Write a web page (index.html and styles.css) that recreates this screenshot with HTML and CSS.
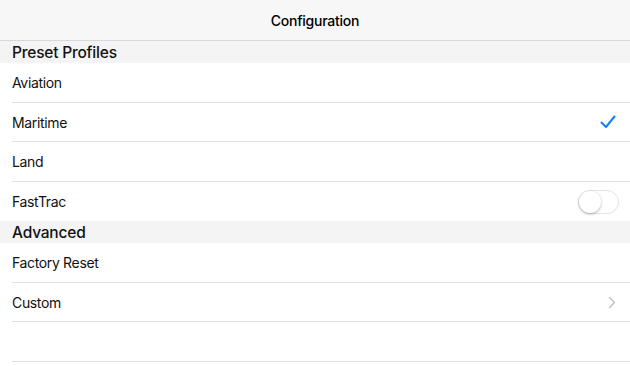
FILE: index.html
```html
<!DOCTYPE html>
<html lang="en">

<head>
    <meta charset="UTF-8" />
    <meta name="viewport" content="width=device-width, initial-scale=1.0" />
    <title>Configuration</title>
    <link rel="stylesheet" href="styles.css">
</head>

<body>
    <!-- Navigation bar -->
    <div class="nav-bar">Configuration</div>

    <!-- Preset Profiles -->
    <div class="section-header">Preset Profiles</div>
    <ul class="table-section">
        <li class="cell">Aviation</li>
        <li class="cell">
            Maritime
            <svg class="checkmark" width="16" height="14" viewBox="0 0 16 14">
                <path d="M1.5 7.5 L6 12 L14.5 1.5" fill="none" stroke="#157efb" stroke-width="2" stroke-linecap="round" stroke-linejoin="round" />
            </svg>
        </li>
        <li class="cell">Land</li>
        <li class="cell last">
            FastTrac
            <span class="switch"><span class="knob"></span></span>
        </li>
    </ul>

    <!-- Advanced -->
    <div class="section-header">Advanced</div>
    <ul class="table-section">
        <li class="cell">Factory Reset</li>
        <li class="cell">
            Custom
            <svg class="chevron" width="8" height="13" viewBox="0 0 8 13">
                <path d="M1.5 1.5 L6.5 6.5 L1.5 11.5" fill="none" stroke="#c4c4c8" stroke-width="1.6" stroke-linecap="round" stroke-linejoin="round" />
            </svg>
        </li>
        <li class="cell"></li>
    </ul>
</body>

</html>
```

FILE: styles.css
```css
body {
    font-family: Inter, "Liberation Sans", Arial, sans-serif;
    margin: 0;
    background-color: #ffffff;
    color: #000;
}

.nav-bar {
    height: 40px;
    display: flex;
    align-items: center;
    justify-content: center;
    background-color: #f7f7f7;
    border-bottom: 1px solid #d8d8d8;
    font-size: 14px;
    font-weight: 500;
    letter-spacing: -0.25px;
}

.section-header {
    height: 22px;
    display: flex;
    align-items: center;
    padding-left: 12px;
    background-color: #f4f4f4;
    font-size: 15.5px;
    font-weight: 500;
    letter-spacing: -0.2px;
    color: #111;
}

.table-section {
    list-style: none;
    margin: 0;
    padding: 0 0 0 12px;
}

.cell {
    height: 39.5px;
    box-sizing: border-box;
    display: flex;
    align-items: center;
    justify-content: space-between;
    padding-top: 1px;
    padding-right: 12px;
    border-bottom: 1px solid #e2e2e2;
    font-size: 14px;
    letter-spacing: -0.35px;
    color: #111;
}

.cell.last {
    border-bottom: none;
}

.checkmark {
    margin-right: 2px;
}

.chevron {
    margin-right: 2px;
}

.switch {
    width: 41px;
    height: 24px;
    box-sizing: border-box;
    border-radius: 12px;
    border: 1px solid #e3e3e3;
    background: white;
    display: flex;
    align-items: center;
    margin-right: -1px;
}

.knob {
    width: 22px;
    height: 22px;
    border-radius: 50%;
    background: white;
    box-shadow: 0 1px 3px rgba(0, 0, 0, 0.3);
}
```
